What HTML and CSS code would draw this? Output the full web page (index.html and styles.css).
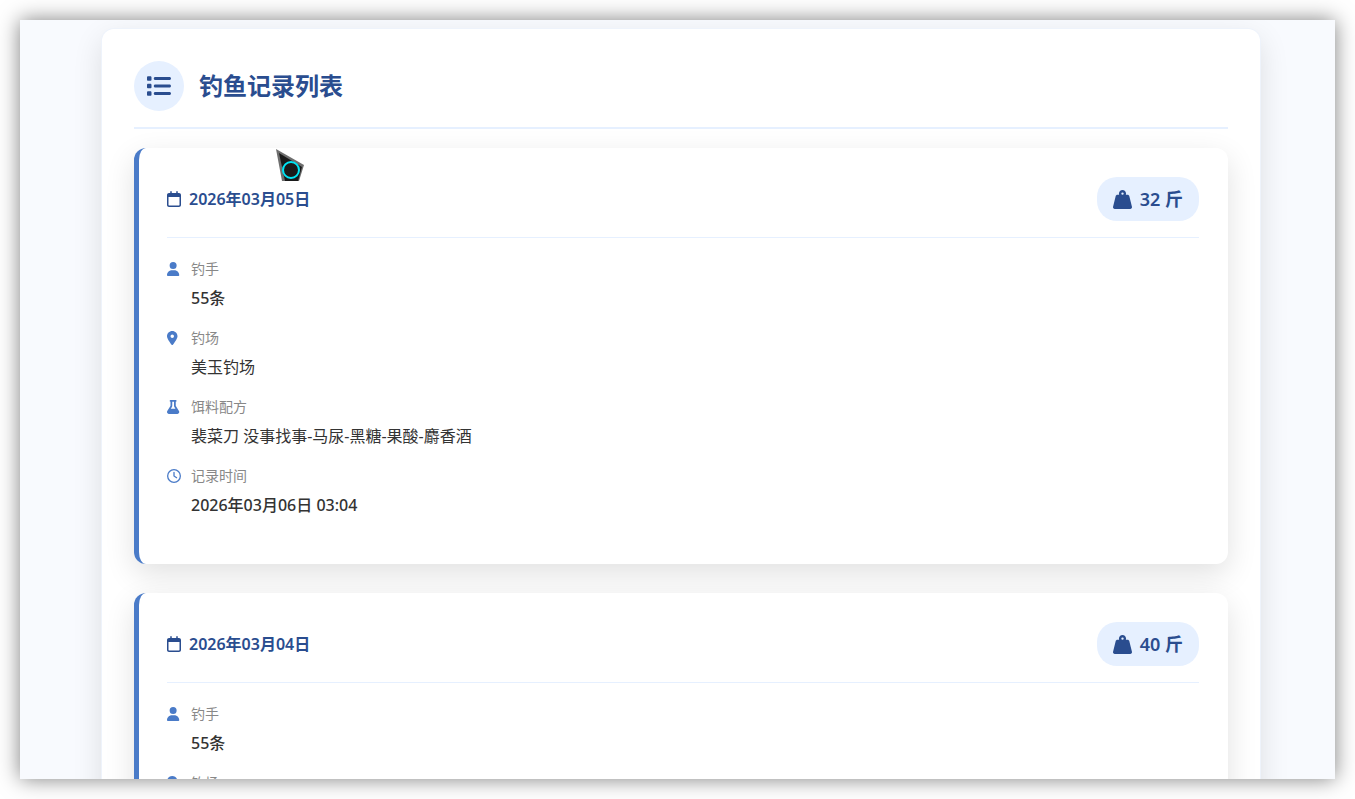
FILE: index.html
```html
<!DOCTYPE html>
<html lang="zh-CN">
<head>
    <meta charset="UTF-8">
    <meta name="viewport" content="width=device-width, initial-scale=1.0">
    <title>钓鱼记录列表</title>
    <link rel="stylesheet" href="styles.css">
</head>
<body>
    <!-- icon set -->
    <svg class="sprite" aria-hidden="true">
        <symbol id="i-list" viewBox="0 0 512 512"><path d="M24 48C10.700 48 0 58.700 0 72v48c0 13.300 10.700 24 24 24H72c13.300 0 24-10.700 24-24V72c0-13.300-10.700-24-24-24H24zM176 64c-17.700 0-32 14.300-32 32s14.300 32 32 32H480c17.700 0 32-14.300 32-32s-14.300-32-32-32H176zm0 160c-17.700 0-32 14.300-32 32s14.300 32 32 32H480c17.700 0 32-14.300 32-32s-14.300-32-32-32H176zm0 160c-17.700 0-32 14.300-32 32s14.300 32 32 32H480c17.700 0 32-14.300 32-32s-14.300-32-32-32H176zM0 232v48c0 13.300 10.700 24 24 24H72c13.300 0 24-10.700 24-24V232c0-13.300-10.700-24-24-24H24c-13.300 0-24 10.700-24 24zM24 368c-13.300 0-24 10.700-24 24v48c0 13.300 10.700 24 24 24H72c13.300 0 24-10.700 24-24V392c0-13.300-10.700-24-24-24H24z"/></symbol>
        <symbol id="i-calendar" viewBox="0 0 448 512"><path d="M152 24c0-13.300-10.700-24-24-24s-24 10.700-24 24V64H64C28.700 64 0 92.700 0 128v320c0 35.300 28.700 64 64 64H384c35.300 0 64-28.700 64-64V128c0-35.300-28.700-64-64-64H344V24c0-13.300-10.700-24-24-24s-24 10.700-24 24V64H152V24zM48 192H400V448c0 8.800-7.200 16-16 16H64c-8.800 0-16-7.200-16-16V192z"/></symbol>
        <symbol id="i-weight" viewBox="0 0 512 512"><path d="M224 96a32 32 0 1 1 64 0 32 32 0 1 1-64 0zm122.500 32c3.500-10 5.500-20.800 5.500-32c0-53-43-96-96-96s-96 43-96 96c0 11.200 1.900 22 5.500 32H120c-22 0-41.200 15-46.600 36.400l-72 288c-3.600 14.300-.4 29.500 8.700 41.200S33.200 512 48 512H464c14.800 0 28.700-6.800 37.800-18.500s12.300-26.800 8.700-41.200l-72-288C433.200 143 414 128 392 128H346.500z"/></symbol>
        <symbol id="i-user" viewBox="0 0 448 512" preserveAspectRatio="xMinYMid"><path d="M224 256A128 128 0 1 0 224 0a128 128 0 1 0 0 256zm-45.700 48C79.800 304 0 383.800 0 482.300C0 498.700 13.300 512 29.700 512H418.300c16.400 0 29.700-13.300 29.700-29.700C448 383.800 368.200 304 269.700 304H178.300z"/></symbol>
        <symbol id="i-pin" viewBox="0 0 384 512" preserveAspectRatio="xMinYMid"><path d="M215.700 499.200C267 435 384 279.400 384 192C384 86 298 0 192 0S0 86 0 192c0 87.400 117 243 168.300 307.200c12.300 15.300 35.100 15.300 47.400 0zM192 128a64 64 0 1 1 0 128 64 64 0 1 1 0-128z"/></symbol>
        <symbol id="i-flask" viewBox="0 0 448 512" preserveAspectRatio="xMinYMid"><path d="M288 0H160 128C110.300 0 96 14.300 96 32s14.300 32 32 32V196.800c0 11.800-3.300 23.500-9.500 33.500L10.300 406.200C3.600 417.200 0 429.700 0 442.600C0 480.900 31.100 512 69.400 512H378.600c38.300 0 69.400-31.100 69.400-69.400c0-12.800-3.600-25.400-10.300-36.400L329.500 230.400c-6.200-10.100-9.500-21.700-9.500-33.500V64c17.700 0 32-14.300 32-32s-14.300-32-32-32H288zM192 196.800V64h64V196.800c0 23.700 6.600 46.900 19 67.100L309.500 320h-171L173 263.900c12.400-20.200 19-43.400 19-67.100z"/></symbol>
        <symbol id="i-clock" viewBox="0 0 512 512"><path d="M464 256A208 208 0 1 1 48 256a208 208 0 1 1 416 0zM0 256a256 256 0 1 0 512 0A256 256 0 1 0 0 256zM232 120V256c0 8 4 15.500 10.700 20l96 64c11 7.400 25.900 4.400 33.300-6.700s4.400-25.900-6.700-33.300L280 243.200V120c0-13.300-10.700-24-24-24s-24 10.700-24 24z"/></symbol>
    </svg>

    <div class="window">
        <main class="panel">
            <header class="panel-header">
                <span class="panel-icon"><svg><use href="#i-list"/></svg></span>
                <h1>钓鱼记录列表</h1>
            </header>

            <article class="record">
                <div class="record-header">
                    <div class="record-date"><svg><use href="#i-calendar"/></svg>2026年03月05日</div>
                    <div class="record-weight"><svg><use href="#i-weight"/></svg>32 斤</div>
                </div>
                <dl class="record-details">
                    <div class="detail">
                        <dt><svg><use href="#i-user"/></svg>钓手</dt>
                        <dd>55条</dd>
                    </div>
                    <div class="detail">
                        <dt><svg><use href="#i-pin"/></svg>钓场</dt>
                        <dd class="plain">美玉钓场</dd>
                    </div>
                    <div class="detail">
                        <dt><svg><use href="#i-flask"/></svg>饵料配方</dt>
                        <dd class="plain">裴菜刀 没事找事-马尿-黑糖-果酸-麝香酒</dd>
                    </div>
                    <div class="detail">
                        <dt><svg><use href="#i-clock"/></svg>记录时间</dt>
                        <dd>2026年03月06日 03:04</dd>
                    </div>
                </dl>
            </article>

            <article class="record">
                <div class="record-header">
                    <div class="record-date"><svg><use href="#i-calendar"/></svg>2026年03月04日</div>
                    <div class="record-weight"><svg><use href="#i-weight"/></svg>40 斤</div>
                </div>
                <dl class="record-details">
                    <div class="detail">
                        <dt><svg><use href="#i-user"/></svg>钓手</dt>
                        <dd>55条</dd>
                    </div>
                    <div class="detail">
                        <dt><svg><use href="#i-pin"/></svg>钓场</dt>
                    </div>
                </dl>
            </article>
        </main>

        <svg class="pointer" viewBox="0 0 30 34" aria-hidden="true">
            <path d="M1 1L29 17L24 33H7z" fill="#6e6e6e"/>
            <path d="M4 5L27 19L23 33H10z" fill="#1a1a1a"/>
            <circle cx="16" cy="22" r="8" fill="#1a1a1a" stroke="#00e5f5" stroke-width="2"/>
        </svg>
    </div>
</body>
</html>
```
FILE: styles.css
```css
* {
    box-sizing: border-box;
    margin: 0;
    padding: 0;
}
body {
    font-family: "Noto Sans", "Noto Sans CJK SC", sans-serif;
    font-size: 16px;
    color: #333;
    background-color: #fff;
    height: 100vh;
    padding: 20px;
}
svg {
    fill: currentColor;
    flex-shrink: 0;
}
.sprite {
    display: none;
}
.window {
    position: relative;
    height: 100%;
    overflow: hidden;
    padding: 9px 75px 0 82px;
    background-color: #f8fafe;
    box-shadow: 0 0 20px rgba(0, 0, 0, 0.5);
}
.panel {
    background-color: #fff;
    border-radius: 12px;
    padding: 32px;
    box-shadow: 0 0 0 1px #eef3fb, 0 10px 30px rgba(0, 0, 0, 0.12);
}
.panel-header {
    display: flex;
    align-items: center;
    gap: 15px;
    padding-bottom: 16px;
    margin-bottom: 19px;
    border-bottom: 2px solid #e6f0ff;
    color: #2a4d8f;
}
.panel-icon {
    display: flex;
    align-items: center;
    justify-content: center;
    width: 50px;
    height: 50px;
    border-radius: 50%;
    background-color: #e6f0ff;
}
.panel-icon svg {
    width: 24px;
    height: 24px;
}
.panel-header h1 {
    font-size: 24px;
    line-height: 34px;
    font-weight: 700;
}
.record {
    background-color: #fff;
    border-left: 5px solid #4a7bc8;
    border-radius: 12px;
    padding: 29px 29px 30px 28px;
    margin-bottom: 29px;
    box-shadow: 0 10px 30px rgba(0, 0, 0, 0.12);
}
.record-header {
    display: flex;
    justify-content: space-between;
    align-items: center;
    padding-bottom: 16px;
    margin-bottom: 20px;
    border-bottom: 1px solid #e6f0ff;
    color: #2a4d8f;
}
.record-date {
    display: flex;
    align-items: center;
    gap: 8px;
    line-height: 22px;
    font-weight: 600;
}
.record-date svg {
    width: 14px;
    height: 16px;
}
.record-weight {
    display: flex;
    align-items: center;
    gap: 8px;
    height: 44px;
    padding: 0 16px;
    border-radius: 20px;
    background-color: #e6f0ff;
    font-size: 18px;
    line-height: 26px;
    font-weight: 600;
}
.record-weight svg {
    width: 19px;
    height: 19px;
}
.detail {
    margin-bottom: 16px;
}
.detail dt {
    display: flex;
    align-items: center;
    gap: 10px;
    margin-bottom: 5px;
    font-size: 14px;
    line-height: 22px;
    color: #888;
}
.detail dt svg {
    width: 14px;
    height: 14px;
    color: #4a7bc8;
}
.detail dd {
    padding-left: 24px;
    line-height: 26px;
    font-weight: 500;
}
.detail dd.plain {
    font-weight: 400;
}
.pointer {
    position: absolute;
    left: 255px;
    top: 128px;
    width: 30px;
    height: 34px;
}
```
